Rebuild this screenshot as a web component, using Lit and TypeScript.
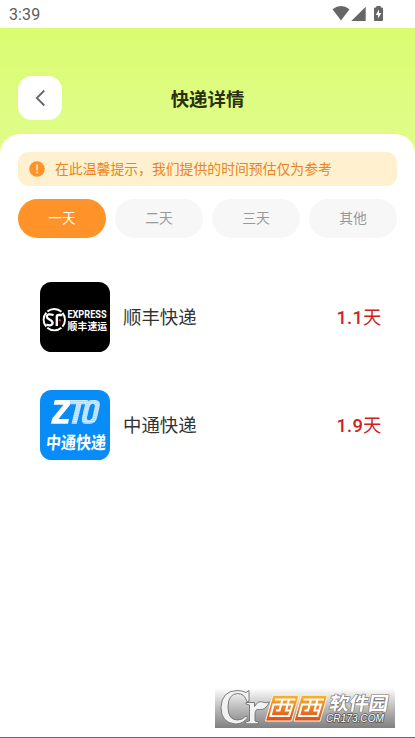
import { LitElement, html, css, svg } from "lit";
import { customElement, property, state } from "lit/decorators.js";
import { classMap } from "lit/directives/class-map.js";

const CJK = css`"Noto Sans CJK SC", sans-serif`;

@customElement("status-bar")
class StatusBar extends LitElement {
  static styles = css`
    :host {
      display: flex;
      justify-content: space-between;
      height: 28px;
      background: #fff;
      color: #5c5c5c;
      font: 16px/29px Roboto, sans-serif;
    }
    .time { padding-left: 9px; letter-spacing: 0.1px; }
    svg { display: block; }
  `;
  render() {
    return html`
      <span class="time">3:39</span>
      <svg width="87" height="28" viewBox="328 0 87 28" fill="#666">
        <path d="M332.5 9.2Q341 2.800 349.500 9.200L341 20.600Z" />
        <path d="M365.700 6.700V21H351.300Z" />
        <path d="M376.300 6h4.400v1.600h1.300q1 0 1 1V20q0 1-1 1h-7q-1 0-1-1V8.600q0-1 1-1h1.300Z" />
        <path d="M379 9.500l-3.200 5.400h2.200V18.500l3.400-5.400H379Z" fill="#fff" />
      </svg>
    `;
  }
}

@customElement("courier-logo")
class CourierLogo extends LitElement {
  @property() brand = "";
  static styles = css`
    :host { display: block; width: 70px; height: 70px; border-radius: 11.500px; overflow: hidden; }
    svg { display: block; }
    text { font-family: ${CJK}; }
    .latin { font-family: Roboto, sans-serif; font-weight: 700; }
    .bold { font-weight: 700; }
  `;
  private sf() {
    return svg`
      <rect width="70" height="70" fill="#000" />
      <circle cx="14.300" cy="37.700" r="10.700" fill="none" stroke="#fff" stroke-width="1.900"
        stroke-dasharray="15.300 1.500" stroke-dashoffset="-9" />
      <path d="M13.600 33Q6.800 31 6.800 34.700C6.800 37.700 12.600 37.400 12.600 40.900Q12.500 44.600 6.300 42.600"
        fill="none" stroke="#fff" stroke-width="2.300" />
      <path d="M16.800 44.100V34.900Q16.800 33 18.700 33H22.400" fill="none" stroke="#fff" stroke-width="2.400" />
      <circle cx="19.800" cy="38.300" r="1.200" fill="#d9282e" />
      <text class="latin" x="27.400" y="35.900" font-size="11.800" textLength="39.200" lengthAdjust="spacingAndGlyphs" fill="#fff">EXPRESS</text>
      <text class="bold" y="47.900" font-size="9.800" fill="#fff" x="27.400 37.400 47.400 57.300">顺丰速运</text>
    `;
  }
  private zto() {
    return svg`
      <defs>
        <pattern id="stripes" width="4" height="1.950" patternUnits="userSpaceOnUse">
          <rect width="4" height="1.950" fill="#8fcbff" />
          <rect width="4" height="1.150" fill="#e5f4ff" />
        </pattern>
      </defs>
      <rect width="70" height="70" fill="#088cf8" />
      <path d="M14.800 10H31L30 15.100L18.500 29H29L27.900 33.800H11L12.200 28.500L23.500 14.800H13.600Z" fill="#fff" />
      <path d="M30.500 10H48L47 14.300H41.500L36.800 33.800H31.500L36.200 14.300H29.500Z" fill="url(#stripes)" />
      <path fill-rule="evenodd" fill="url(#stripes)"
        d="M51.500 10H55Q61 10 59.700 16L57.300 27Q55.800 33.800 50 33.800H46Q40.700 33.800 42 27.500L44.500 16.500Q45.800 10 51.500 10ZM52 14Q50.200 14 49.500 17L47.100 27Q46.600 30 48.300 30H50Q51.800 30 52.500 27L54.700 17Q55.200 14 53.500 14Z" />
      <text class="bold" transform="translate(5.500 58.600) skewX(-5)" font-size="17.500" textLength="60" lengthAdjust="spacingAndGlyphs" fill="#fff">中通快递</text>
    `;
  }
  render() {
    return html`<svg width="70" height="70" viewBox="0 0 70 70">${this.brand === "sf" ? this.sf() : this.zto()}</svg>`;
  }
}

@customElement("site-badge")
class SiteBadge extends LitElement {
  static styles = css`
    :host { display: block; }
    svg { display: block; }
    .cjk { font-family: ${CJK}; font-weight: 700; }
    .latin { font-family: "Liberation Sans", sans-serif; font-style: italic; }
    text { paint-order: stroke; stroke-linejoin: round; }
  `;
  render() {
    return html`
      <svg width="180" height="40" viewBox="0 0 180 40">
        <defs>
          <linearGradient id="back" x2="0" y2="1">
            <stop offset="0" stop-color="#fff" />
            <stop offset="0.500" stop-color="#bbb" />
            <stop offset="1" stop-color="#808080" />
          </linearGradient>
          <linearGradient id="tile" x2="0" y2="1">
            <stop offset="0" stop-color="#f9b52c" />
            <stop offset="1" stop-color="#df4c1b" />
          </linearGradient>
        </defs>
        <rect width="180" height="40" fill="url(#back)" />
        <g fill="#f2f2f2" stroke="#707070" stroke-width="0.900">
          <path d="M34 2.500V13.500H32Q29.500 5.500 22.500 5.500Q13 6 13 19Q13 32 22.500 32Q27.500 32 31 28L32.500 29.800Q28 36 20.500 36Q6 35 6 19.500Q6.500 3 22 2.500Q27.500 2.500 31 4.500Z" />
          <path d="M31 14.500H39.500V18.500Q43 12.500 47.500 14Q50.500 15.500 54.500 14Q50.500 22.500 44.500 21.500Q40 20.500 40 26V33L43.500 34V35.800H30.500V34L34.500 33V17L31 16Z" />
        </g>
        <path d="M58 7.200H84L76.500 33H50.500Z M86.500 7.200H112.500L105 33H79Z" fill="url(#tile)" stroke="#fff4df" stroke-width="1" />
        <g fill="none" stroke="#fff" stroke-width="2.100">
          <path d="M60 11.500H80.500M67.500 11.500L64.500 22.500H61M74 11.500L71 22.500H75M58.500 16.500H77.500L74 28H55.500Z" />
          <path d="M88.500 11.500H109M96 11.500L93 22.500H89.500M102.500 11.500L99.500 22.500H103.500M87 16.500H106L102.500 28H84Z" />
        </g>
        <text class="cjk" transform="translate(113.500 22) skewX(-10)" font-size="18.500" textLength="59" lengthAdjust="spacingAndGlyphs"
          fill="#fff" stroke="#777" stroke-width="1.400">软件园</text>
        <text class="latin" x="111" y="34" font-size="10.800" textLength="58" lengthAdjust="spacingAndGlyphs"
          fill="#fff" stroke="#555" stroke-width="1.700">CR173.COM</text>
      </svg>
    `;
  }
}

@customElement("app-root")
class AppRoot extends LitElement {
  @state() private active = 0;
  private tabs = ["一天", "二天", "三天", "其他"];
  private couriers = [
    { brand: "sf", name: "顺丰快递", days: "1.1" },
    { brand: "zto", name: "中通快递", days: "1.9" },
  ];

  static styles = css`
    :host {
      display: flex;
      flex-direction: column;
      position: relative;
      height: 738px;
      box-sizing: border-box;
      overflow: hidden;
      background: #fff;
      border-bottom: 1px solid #6a6a6a;
      font-family: ${CJK};
    }
    .hero {
      height: 126px;
      flex: none;
      padding: 48px 18px 0;
      box-sizing: border-box;
      display: grid;
      grid-template-columns: 44px 1fr 44px;
      align-items: start;
      background: linear-gradient(#dafc71, #e1fc8c);
    }
    .back {
      width: 44px;
      height: 44px;
      padding: 0;
      border: 0;
      border-radius: 14px;
      background: #fff;
    }
    .back svg { display: block; }
    .title {
      margin: 0;
      text-align: center;
      font-size: 18.400px;
      line-height: 45px;
      font-weight: 700;
      color: #29300f;
    }
    .sheet {
      flex: 1;
      margin-top: -20px;
      padding: 18px 18px 0;
      border-radius: 20px 20px 0 0;
      background: #fff;
    }
    .notice {
      display: flex;
      align-items: center;
      gap: 10px;
      height: 34px;
      padding-left: 11px;
      border-radius: 10px;
      background: #fff1cf;
      color: #e8851b;
      font-size: 13.850px;
      line-height: 32px;
      white-space: nowrap;
    }
    .notice svg { flex: none; }
    .notice span { height: 34px; }
    .tabs {
      display: grid;
      grid-template-columns: repeat(4, 1fr);
      gap: 9px;
      margin-top: 13px;
    }
    .tab {
      height: 39px;
      padding: 0 0 3px;
      border: 0;
      border-radius: 20px;
      background: #f7f7f7;
      color: #999;
      font: 13.800px/36px ${CJK};
    }
    .tab.on { background: #ff9229; color: #fff; }
    .list {
      display: flex;
      flex-direction: column;
      gap: 38px;
      padding: 44px 15.500px 0 22px;
    }
    .row { display: flex; align-items: center; height: 70px; }
    .name { flex: 1; height: 70px; margin-left: 13px; font-size: 18.400px; line-height: 68px; color: #333; }
    .days { height: 70px; font: 500 18.400px/72px Roboto, ${CJK}; color: #d22020; }
    .num { letter-spacing: 0.200px; }
    .unit { font-weight: 400; }
    .badge { position: absolute; left: 215px; top: 688px; }
  `;

  render() {
    return html`
      <status-bar></status-bar>
      <header class="hero">
        <button class="back" aria-label="返回">
          <svg width="44" height="44" viewBox="0 0 44 44" fill="none" stroke="#666" stroke-width="1.800">
            <path d="M26.300 14.500L18.800 22L26.300 29.500" />
          </svg>
        </button>
        <h1 class="title">快递详情</h1>
      </header>
      <main class="sheet">
        <div class="notice">
          <svg width="16" height="16" viewBox="0 0 16 16">
            <circle cx="8" cy="8" r="7.800" fill="#ff9229" />
            <path d="M8 3.500V9.500M8 10.700V12.300" stroke="#fff1cf" stroke-width="1.500" />
          </svg>
          <span>在此温馨提示，我们提供的时间预估仅为参考</span>
        </div>
        <nav class="tabs">
          ${this.tabs.map(
            (label, i) => html`<button class=${classMap({ tab: true, on: i === this.active })} @click=${() => (this.active = i)}>${label}</button>`
          )}
        </nav>
        <section class="list">
          ${this.couriers.map(
            (c) => html`
              <div class="row">
                <courier-logo brand=${c.brand}></courier-logo>
                <span class="name">${c.name}</span>
                <span class="days"><span class="num">${c.days}</span><span class="unit">天</span></span>
              </div>
            `
          )}
        </section>
      </main>
      <site-badge class="badge"></site-badge>
    `;
  }
}
